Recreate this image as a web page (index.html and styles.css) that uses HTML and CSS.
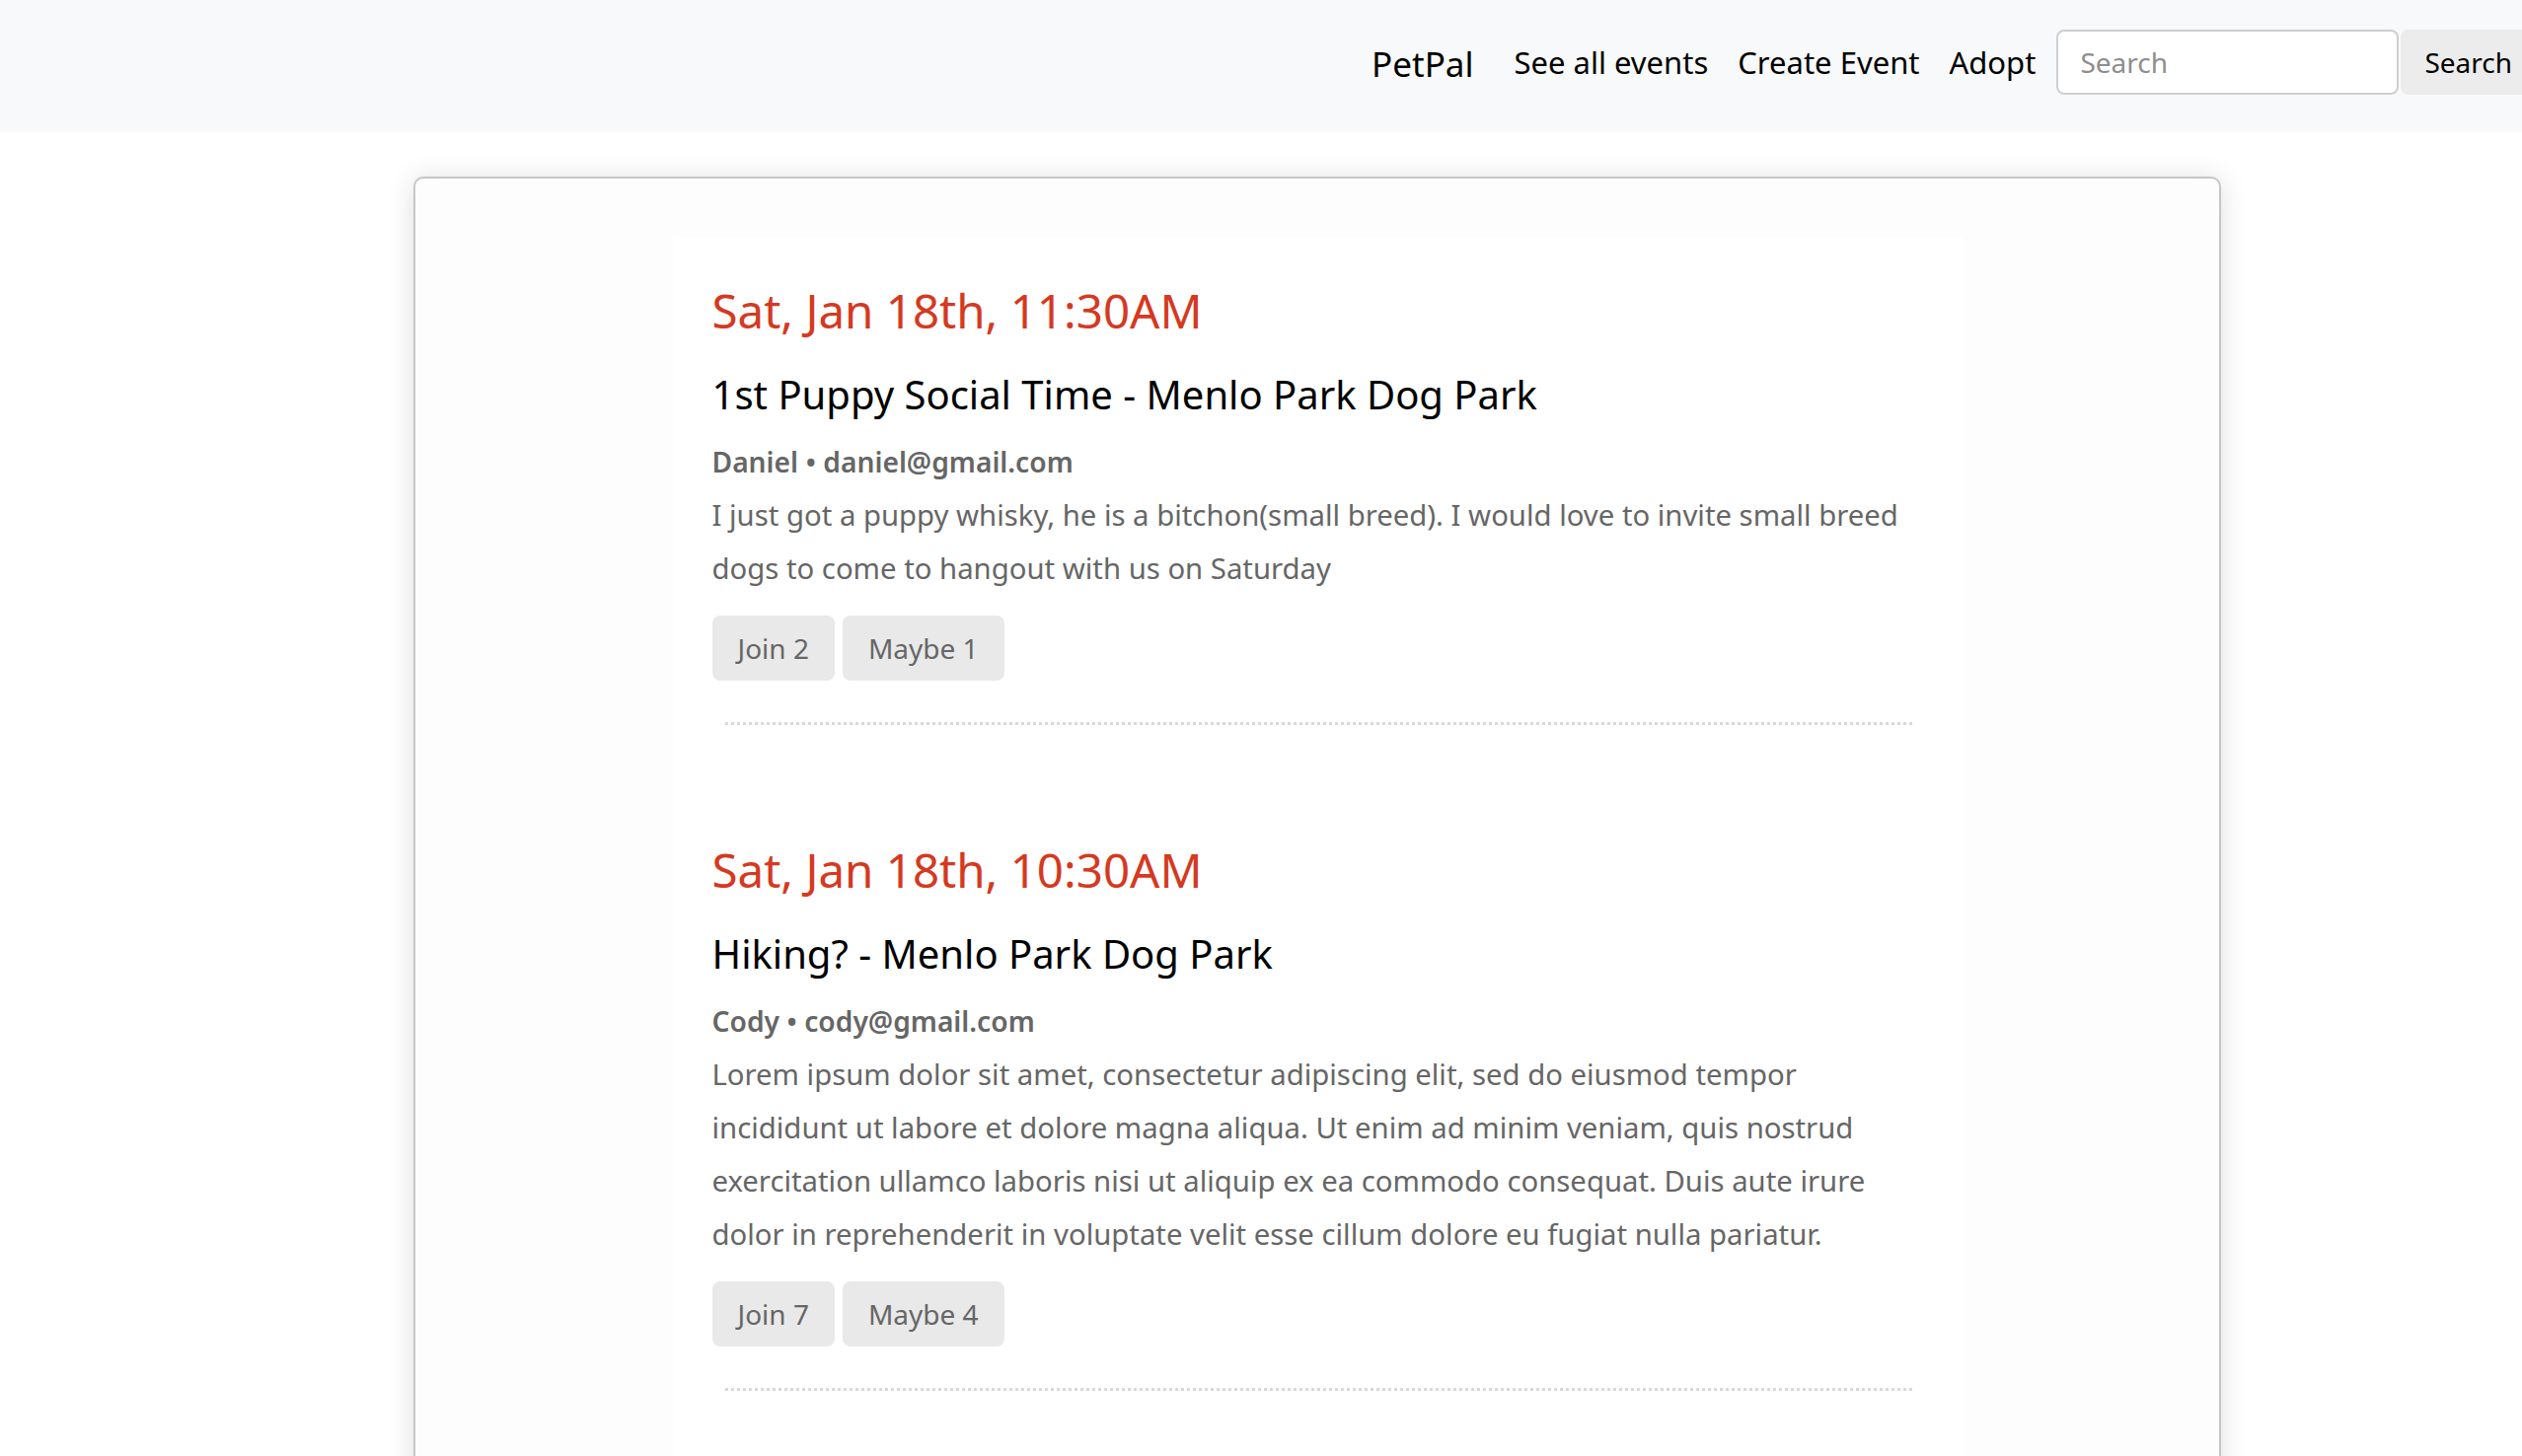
FILE: index.html
```html
<!DOCTYPE html>
<html lang="en">
<head>
<meta charset="utf-8">
<title>PetPal - Events</title>
<link rel="stylesheet" href="styles.css">
</head>
<body>
<nav class="navbar">
  <a class="brand" href="#">PetPal</a>
  <a class="nav-link" href="#">See all events</a>
  <a class="nav-link" href="#">Create Event</a>
  <a class="nav-link" href="#">Adopt</a>
  <form class="search-form">
    <input class="search-input" type="text" placeholder="Search">
    <button class="search-btn" type="button">Search</button>
  </form>
</nav>

<main class="card">
  <section class="event-list">
    <article class="event">
      <h2 class="event-date">Sat, Jan 18th, 11:30AM</h2>
      <h3 class="event-title">1st Puppy Social Time - Menlo Park Dog Park</h3>
      <p class="event-author">Daniel • daniel@gmail.com</p>
      <p class="event-desc">I just got a puppy whisky, he is a bitchon(small breed). I would love to invite small breed dogs to come to hangout with us on Saturday</p>
      <div class="event-actions">
        <button class="rsvp-btn" type="button">Join 2</button>
        <button class="rsvp-btn" type="button">Maybe 1</button>
      </div>
      <hr class="divider">
    </article>
    <article class="event">
      <h2 class="event-date">Sat, Jan 18th, 10:30AM</h2>
      <h3 class="event-title">Hiking? - Menlo Park Dog Park</h3>
      <p class="event-author">Cody • cody@gmail.com</p>
      <p class="event-desc">Lorem ipsum dolor sit amet, consectetur adipiscing elit, sed do eiusmod tempor incididunt ut labore et dolore magna aliqua. Ut enim ad minim veniam, quis nostrud exercitation ullamco laboris nisi ut aliquip ex ea commodo consequat. Duis aute irure dolor in reprehenderit in voluptate velit esse cillum dolore eu fugiat nulla pariatur.</p>
      <div class="event-actions">
        <button class="rsvp-btn" type="button">Join 7</button>
        <button class="rsvp-btn" type="button">Maybe 4</button>
      </div>
      <hr class="divider">
    </article>
  </section>
</main>
</body>
</html>
```

FILE: styles.css
```css
* {
  box-sizing: border-box;
}

html, body {
  margin: 0;
  padding: 0;
  overflow-x: hidden;
  background: #ffffff;
}

body {
  font-family: "Noto Sans", "Open Sans", sans-serif;
  color: #000;
}

.navbar {
  height: 134px;
  padding-bottom: 8px;
  background: #f8f9fa;
  display: flex;
  align-items: center;
  justify-content: flex-end;
}

.brand {
  font-size: 35px;
  color: #000;
  text-decoration: none;
  margin-right: 26px;
  padding-top: 3px;
}

.nav-link {
  font-size: 31px;
  color: #000;
  text-decoration: none;
  padding: 0 15px;
}

.search-form {
  display: flex;
  align-items: center;
  margin-left: 6px;
  margin-right: -14px;
}

.search-input {
  width: 347px;
  height: 66px;
  border: 2px solid #cfcfcf;
  border-radius: 8px;
  background: #fff;
  padding: 0 22px;
  font-family: inherit;
  font-size: 28px;
  color: #333;
  outline: none;
}

.search-input::placeholder {
  color: #8e8e8e;
}

.search-btn {
  height: 66px;
  margin-left: 2px;
  border: 0;
  border-radius: 8px;
  background: #ececec;
  padding: 0 24px;
  font-family: inherit;
  font-size: 28px;
  color: #000;
}

.card {
  margin: 45px 0 0 419px;
  width: 1832px;
  min-height: 1400px;
  background: #fdfdfd;
  border: 2px solid #c6c6c6;
  border-radius: 10px;
  box-shadow: 0 2px 28px rgba(0, 0, 0, 0.13);
  padding-top: 59px;
}

.event-list {
  width: 1307px;
  margin: 0 auto;
  background: #ffffff;
  min-height: 1340px;
}

.event {
  padding: 46px 43px 0 40px;
}

.event-date {
  margin: 0 0 32px;
  font-size: 47.5px;
  line-height: 58px;
  font-weight: 400;
  color: #d5391f;
}

.event-title {
  margin: 0 0 22px;
  font-size: 40px;
  line-height: 48px;
  font-weight: 400;
  color: #000;
}

.event-author {
  margin: 0 0 5px;
  font-size: 28.2px;
  line-height: 44px;
  font-weight: 600;
  color: #666;
}

.event-desc {
  margin: 0;
  font-size: 29.3px;
  line-height: 54px;
  color: #666;
}

.event-actions {
  display: flex;
  gap: 8px;
  margin-top: 21px;
}

.rsvp-btn {
  height: 66px;
  border: 0;
  border-radius: 8px;
  background: #e9e9e9;
  padding: 0 26px;
  font-family: inherit;
  font-size: 28px;
  color: #666;
}

.divider {
  margin: 42px 8px 72px 13px;
  height: 0;
  border: 0;
  border-top: 3px dotted #d9d9d9;
  border-left: 1px solid #d0d0d0;
}
```
